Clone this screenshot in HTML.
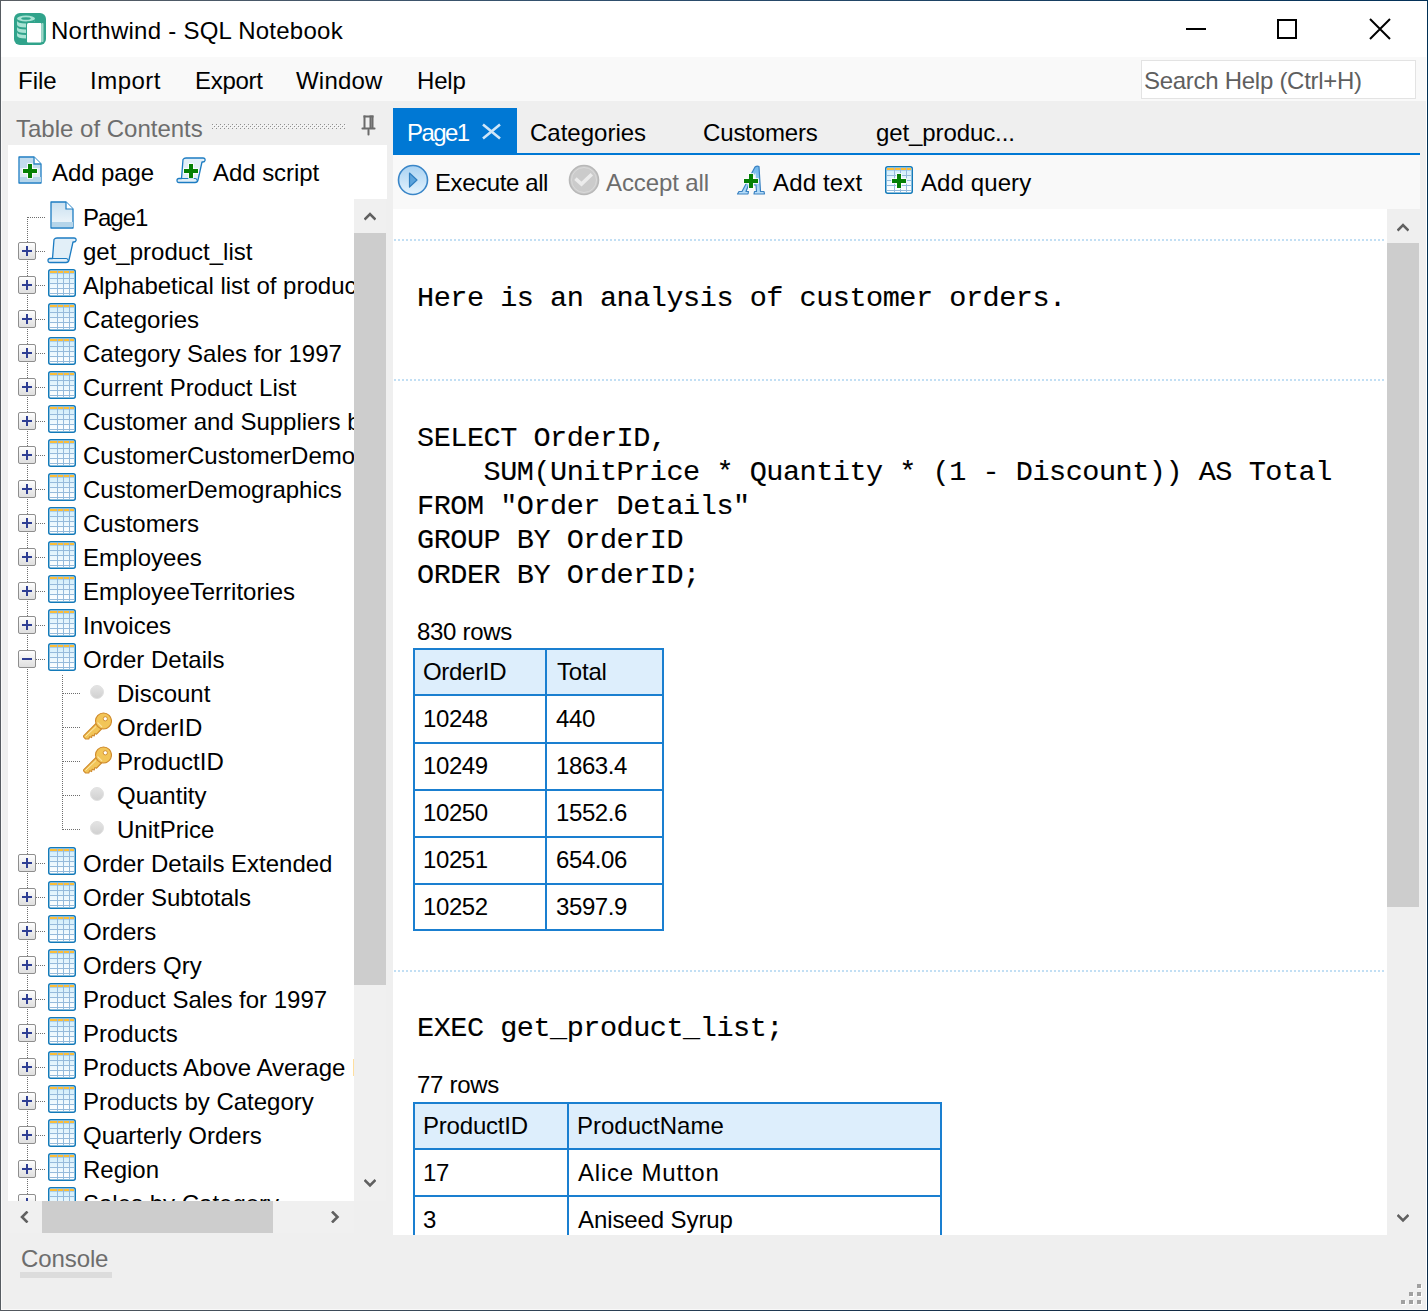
<!DOCTYPE html><html><head><meta charset="utf-8"><title>Northwind - SQL Notebook</title><style>*{margin:0;padding:0}html,body{width:1428px;height:1311px;overflow:hidden;background:#efefef}
.t{position:absolute;white-space:pre}</style></head><body><div style="position:relative;width:1428px;height:1311px;overflow:hidden;font-family:&quot;Liberation Sans&quot;,sans-serif"><div style="position:absolute;left:0px;top:0px;width:1428px;height:1311px;background:#efefef;"></div>
<div style="position:absolute;left:0px;top:0px;width:1428px;height:57px;background:#ffffff;"></div>
<div style="position:absolute;left:0px;top:57px;width:1428px;height:44px;background:#f9f9f9;"></div>
<svg style="position:absolute;left:14px;top:13px" width="32" height="32" viewBox="0 0 32 32">
<rect x="0" y="0" width="32" height="32" rx="6" fill="#30a38b"/>
<g fill="#a8e3d4">
<ellipse cx="12" cy="5.5" rx="9" ry="3"/>
<path d="M3 7.5 Q3 10.5 12 10.5 Q21 10.5 21 7.5 V11.5 Q21 14.5 12 14.5 Q3 14.5 3 11.5Z"/>
<path d="M3 13.5 Q3 16.5 12 16.5 Q21 16.5 21 13.5 V17 Q21 20 12 20 Q3 20 3 17Z"/>
<path d="M3 19 Q3 22 12 22 Q21 22 21 19 V22.5 Q21 25.5 12 25.5 Q3 25.5 3 22.5Z"/>
</g>
<ellipse cx="12" cy="5.5" rx="4.8" ry="1.3" fill="#30a38b"/>
<path d="M12 10 Q12 8.5 14 8.5 H29.5 V30 H12Z" fill="#30a38b"/>
<rect x="16" y="10" width="13.5" height="19" rx="1" fill="#9ed8c9"/><rect x="14" y="9" width="14" height="21" fill="#30a38b"/>
<path d="M13 11.5 Q13 10 14.5 10 H26.5 Q27.5 10 27.5 11 V28.5 Q27.5 29.5 26.5 29.5 H14 Q13 29.5 13 28.5Z" fill="#ffffff"/>
</svg>
<div class="t" style="left:51px;top:19px;font-family:'Liberation Sans', sans-serif;font-size:24px;line-height:24px;color:#000;letter-spacing:0.25px">Northwind - SQL Notebook</div>
<svg style="position:absolute;left:1180px;top:10px" width="120" height="40" viewBox="0 0 120 40">
<rect x="6" y="18" width="20" height="2" fill="#000"/>
<rect x="98" y="10" width="18" height="18" fill="none" stroke="#000" stroke-width="2"/>
</svg>
<svg style="position:absolute;left:1365px;top:14px" width="30" height="30" viewBox="0 0 30 30"><path d="M5 5 L25 25 M25 5 L5 25" stroke="#000" stroke-width="2" fill="none"/></svg>
<div class="t" style="left:18px;top:69px;font-family:'Liberation Sans', sans-serif;font-size:24px;line-height:24px;color:#000;letter-spacing:0px">File</div>
<div class="t" style="left:90px;top:69px;font-family:'Liberation Sans', sans-serif;font-size:24px;line-height:24px;color:#000;letter-spacing:0.5px">Import</div>
<div class="t" style="left:195px;top:69px;font-family:'Liberation Sans', sans-serif;font-size:24px;line-height:24px;color:#000;letter-spacing:-0.3px">Export</div>
<div class="t" style="left:296px;top:69px;font-family:'Liberation Sans', sans-serif;font-size:24px;line-height:24px;color:#000;letter-spacing:0.2px">Window</div>
<div class="t" style="left:417px;top:69px;font-family:'Liberation Sans', sans-serif;font-size:24px;line-height:24px;color:#000;letter-spacing:-0.2px">Help</div>
<div style="position:absolute;left:1141px;top:60px;width:275px;height:39px;background:#ffffff;box-sizing:border-box;border:1px solid #e3e3e3"></div>
<div class="t" style="left:1144px;top:69px;font-family:'Liberation Sans', sans-serif;font-size:24px;line-height:24px;color:#5f5f5f;letter-spacing:-0.28px">Search Help (Ctrl+H)</div>
<div class="t" style="left:16px;top:117px;font-family:'Liberation Sans', sans-serif;font-size:24px;line-height:24px;color:#6d6d6d;letter-spacing:0px">Table of Contents</div>
<svg style="position:absolute;left:212px;top:124px" width="134" height="5" viewBox="0 0 134 5"><defs><pattern id="gp" width="4" height="4" patternUnits="userSpaceOnUse"><rect x="0" y="0" width="1" height="1" fill="#8f8f8f"/><rect x="2" y="2" width="1" height="1" fill="#8f8f8f"/><rect x="1" y="1" width="1" height="1" fill="#fbfbfb"/><rect x="3" y="3" width="1" height="1" fill="#fbfbfb"/></pattern></defs><rect width="134" height="5" fill="url(#gp)"/></svg>
<svg style="position:absolute;left:360px;top:114px" width="18" height="24" viewBox="0 0 18 24"><g fill="#6b6b6b"><rect x="3.5" y="1.5" width="10" height="2"/><rect x="3.5" y="1.5" width="2" height="12.5"/><rect x="9.5" y="1.5" width="4" height="12.5"/><rect x="1.5" y="13.5" width="14" height="2" rx="0.8"/><rect x="7.5" y="15" width="2" height="6.5" rx="0.8"/></g><rect x="11" y="3.5" width="0.8" height="10" fill="#8a8a8a"/></svg>
<div style="position:absolute;left:8px;top:145px;width:379px;height:54px;background:#ffffff;"></div>
<svg style="position:absolute;left:18px;top:156px" width="26" height="30" viewBox="0 0 26 30"><path d="M1 1 H16 L23 8 V27 H1 Z" fill="#dcebf5" stroke="#1c7cc2" stroke-width="1.3" stroke-linejoin="round"/>
<path d="M2 2 H15 V9 H22 V12 H2Z" fill="#c3dcee"/>
<rect x="2" y="21" width="21" height="5" fill="#b5d5ea"/>
<path d="M16 1 V8 H23" fill="#fff" stroke="#2c86c4" stroke-width="1.4"/>
<path d="M5 13 h5 v-5 h4 v5 h5 v4 h-5 v5 h-4 v-5 h-5z" fill="#058005" stroke="#ffffff" stroke-width="1.6" paint-order="stroke" stroke-linejoin="miter"/></svg>
<div class="t" style="left:52px;top:161px;font-family:'Liberation Sans', sans-serif;font-size:24px;line-height:24px;color:#000;letter-spacing:-0.1px">Add page</div>
<svg style="position:absolute;left:176px;top:157px" width="31" height="28" viewBox="0 0 31 28"><path d="M7 2.5 Q8 1 10 1 H27 Q29.5 1 29 3.5 Q28.5 5 27 5 H26 L22 23 Q21.5 25.5 19 25.5 H3 Q1 25.5 1 23.5 Q1 21.5 3 21.5 H5.5 Z" fill="#e2eff8" stroke="#1c7cc2" stroke-width="1.3" stroke-linejoin="round"/>
<path d="M4 21.5 H19 Q21 21.5 21 23.5" fill="none" stroke="#1c7cc2" stroke-width="1.1"/>
<path d="M8 12 h5 v-5 h4 v5 h5 v4 h-5 v5 h-4 v-5 h-5z" fill="#058005" stroke="#ffffff" stroke-width="1.6" paint-order="stroke" stroke-linejoin="miter"/></svg>
<div class="t" style="left:213px;top:161px;font-family:'Liberation Sans', sans-serif;font-size:24px;line-height:24px;color:#000;letter-spacing:-0.05px">Add script</div>
<div style="position:absolute;left:8px;top:199px;width:346px;height:1002px;background:#ffffff;"></div>
<div style="position:absolute;left:354px;top:199px;width:32px;height:1002px;background:#f0f0f0;"></div>
<div style="position:absolute;left:354px;top:233px;width:32px;height:752px;background:#cdcdcd;"></div>
<svg style="position:absolute;left:364px;top:210px" width="12" height="12" viewBox="0 0 12 12"><path d="M0.5 9.5 L6 4 L11.5 9.5" fill="none" stroke="#606060" stroke-width="2.6" stroke-linejoin="miter"/></svg>
<svg style="position:absolute;left:364px;top:1178px" width="12" height="12" viewBox="0 0 12 12"><path d="M0.5 2 L6 7.5 L11.5 2" fill="none" stroke="#606060" stroke-width="2.6" stroke-linejoin="miter"/></svg>
<div style="position:absolute;left:8px;top:1201px;width:346px;height:32px;background:#f0f0f0;"></div>
<div style="position:absolute;left:42px;top:1201px;width:231px;height:32px;background:#cdcdcd;"></div>
<svg style="position:absolute;left:18px;top:1211px" width="12" height="12" viewBox="0 0 12 12"><path d="M9.5 0.5 L4 6 L9.5 11.5" fill="none" stroke="#606060" stroke-width="2.6"/></svg>
<svg style="position:absolute;left:330px;top:1211px" width="12" height="12" viewBox="0 0 12 12"><path d="M2 0.5 L7.5 6 L2 11.5" fill="none" stroke="#606060" stroke-width="2.6"/></svg>
<div style="position:absolute;left:8px;top:199px;width:346px;height:1002px;overflow:hidden">
<svg width="0" height="0" style="position:absolute"><defs>
<linearGradient id="tg" x1="0" y1="0" x2="0" y2="1"><stop offset="0" stop-color="#d2eefb"/><stop offset="1" stop-color="#ffffff"/></linearGradient>
<linearGradient id="pg" x1="0" y1="0" x2="0" y2="1"><stop offset="0" stop-color="#c9e0f0"/><stop offset="1" stop-color="#f4f9fc"/></linearGradient>
<linearGradient id="bg" x1="0" y1="0" x2="0" y2="1"><stop offset="0" stop-color="#ffffff"/><stop offset="1" stop-color="#dedede"/></linearGradient>
<linearGradient id="dg" x1="0" y1="0" x2="0" y2="1"><stop offset="0" stop-color="#e4e4e4"/><stop offset="1" stop-color="#d0d0d0"/></linearGradient>
</defs></svg>
<div style="position:absolute;left:19px;top:18px;width:1px;height:1002px;background:;background:repeating-linear-gradient(to bottom,#6e6e6e 0 1px,transparent 1px 2px)"></div>
<div style="position:absolute;left:54px;top:476px;width:1px;height:155px;background:;background:repeating-linear-gradient(to bottom,#6e6e6e 0 1px,transparent 1px 2px)"></div>
<div style="position:absolute;left:20px;top:18px;width:18px;height:1px;background:;background:repeating-linear-gradient(to right,#6e6e6e 0 1px,transparent 1px 2px)"></div>
<svg style="position:absolute;left:42px;top:2px" width="24" height="28" viewBox="0 0 24 28"><path d="M1 1 H16 L23 8 V27 H1 Z" fill="url(#pg)" stroke="#1c7cc2" stroke-width="1.3" stroke-linejoin="round"/>
<rect x="2" y="21" width="21" height="5" fill="#b5d5ea"/>
<path d="M16 1 V8 H23" fill="#fff" stroke="#1c7cc2" stroke-width="1.2"/></svg>
<div class="t" style="left:75px;top:7px;font-family:'Liberation Sans', sans-serif;font-size:24px;line-height:24px;color:#000;letter-spacing:-1px">Page1</div>
<div style="position:absolute;left:28px;top:52px;width:10px;height:1px;background:;background:repeating-linear-gradient(to right,#6e6e6e 0 1px,transparent 1px 2px)"></div>
<svg style="position:absolute;left:10px;top:43px" width="18" height="18" viewBox="0 0 18 18"><rect x="0.5" y="0.5" width="17" height="17" rx="1.5" fill="url(#bg)" stroke="#8e8e8e"/><rect x="4" y="8" width="10" height="2" fill="#2f3f94"/><rect x="8" y="4" width="2" height="10" fill="#2f3f94"/></svg>
<svg style="position:absolute;left:39px;top:38px" width="31" height="28" viewBox="0 0 31 28"><path d="M7 2.5 Q8 1 10 1 H27 Q29.5 1 29 3.5 Q28.5 5 27 5 H26 L22 23 Q21.5 25.5 19 25.5 H3 Q1 25.5 1 23.5 Q1 21.5 3 21.5 H5.5 Z" fill="#e2eff8" stroke="#1c7cc2" stroke-width="1.3" stroke-linejoin="round"/>
<path d="M4 21.5 H19 Q21 21.5 21 23.5" fill="none" stroke="#1c7cc2" stroke-width="1.1"/>
</svg>
<div class="t" style="left:75px;top:41px;font-family:'Liberation Sans', sans-serif;font-size:24px;line-height:24px;color:#000;">get_product_list</div>
<div style="position:absolute;left:28px;top:86px;width:10px;height:1px;background:;background:repeating-linear-gradient(to right,#6e6e6e 0 1px,transparent 1px 2px)"></div>
<svg style="position:absolute;left:10px;top:77px" width="18" height="18" viewBox="0 0 18 18"><rect x="0.5" y="0.5" width="17" height="17" rx="1.5" fill="url(#bg)" stroke="#8e8e8e"/><rect x="4" y="8" width="10" height="2" fill="#2f3f94"/><rect x="8" y="4" width="2" height="10" fill="#2f3f94"/></svg>
<svg style="position:absolute;left:40px;top:70px" width="28" height="28" viewBox="0 0 28 28"><rect x="0.75" y="0.75" width="26.5" height="26.5" rx="2" fill="#ffffff" stroke="#137ab9" stroke-width="1.5"/>
<rect x="2" y="4" width="24" height="21" fill="url(#tg)"/>
<rect x="2" y="2" width="24" height="2" fill="#fbbd38"/>
<g fill="#95badb"><rect x="2" y="4" width="24" height="1" fill="#a9d0ee"/><rect x="2" y="9" width="24" height="1"/><rect x="2" y="14" width="24" height="1"/><rect x="2" y="19" width="24" height="1"/><rect x="2" y="24" width="24" height="1"/>
<rect x="9" y="2" width="1" height="24"/><rect x="15" y="2" width="1" height="24"/><rect x="21" y="2" width="1" height="24"/></g></svg>
<div class="t" style="left:75px;top:75px;font-family:'Liberation Sans', sans-serif;font-size:24px;line-height:24px;color:#000;">Alphabetical list of products</div>
<div style="position:absolute;left:28px;top:120px;width:10px;height:1px;background:;background:repeating-linear-gradient(to right,#6e6e6e 0 1px,transparent 1px 2px)"></div>
<svg style="position:absolute;left:10px;top:111px" width="18" height="18" viewBox="0 0 18 18"><rect x="0.5" y="0.5" width="17" height="17" rx="1.5" fill="url(#bg)" stroke="#8e8e8e"/><rect x="4" y="8" width="10" height="2" fill="#2f3f94"/><rect x="8" y="4" width="2" height="10" fill="#2f3f94"/></svg>
<svg style="position:absolute;left:40px;top:104px" width="28" height="28" viewBox="0 0 28 28"><rect x="0.75" y="0.75" width="26.5" height="26.5" rx="2" fill="#ffffff" stroke="#137ab9" stroke-width="1.5"/>
<rect x="2" y="4" width="24" height="21" fill="url(#tg)"/>
<rect x="2" y="2" width="24" height="2" fill="#fbbd38"/>
<g fill="#95badb"><rect x="2" y="4" width="24" height="1" fill="#a9d0ee"/><rect x="2" y="9" width="24" height="1"/><rect x="2" y="14" width="24" height="1"/><rect x="2" y="19" width="24" height="1"/><rect x="2" y="24" width="24" height="1"/>
<rect x="9" y="2" width="1" height="24"/><rect x="15" y="2" width="1" height="24"/><rect x="21" y="2" width="1" height="24"/></g></svg>
<div class="t" style="left:75px;top:109px;font-family:'Liberation Sans', sans-serif;font-size:24px;line-height:24px;color:#000;">Categories</div>
<div style="position:absolute;left:28px;top:154px;width:10px;height:1px;background:;background:repeating-linear-gradient(to right,#6e6e6e 0 1px,transparent 1px 2px)"></div>
<svg style="position:absolute;left:10px;top:145px" width="18" height="18" viewBox="0 0 18 18"><rect x="0.5" y="0.5" width="17" height="17" rx="1.5" fill="url(#bg)" stroke="#8e8e8e"/><rect x="4" y="8" width="10" height="2" fill="#2f3f94"/><rect x="8" y="4" width="2" height="10" fill="#2f3f94"/></svg>
<svg style="position:absolute;left:40px;top:138px" width="28" height="28" viewBox="0 0 28 28"><rect x="0.75" y="0.75" width="26.5" height="26.5" rx="2" fill="#ffffff" stroke="#137ab9" stroke-width="1.5"/>
<rect x="2" y="4" width="24" height="21" fill="url(#tg)"/>
<rect x="2" y="2" width="24" height="2" fill="#fbbd38"/>
<g fill="#95badb"><rect x="2" y="4" width="24" height="1" fill="#a9d0ee"/><rect x="2" y="9" width="24" height="1"/><rect x="2" y="14" width="24" height="1"/><rect x="2" y="19" width="24" height="1"/><rect x="2" y="24" width="24" height="1"/>
<rect x="9" y="2" width="1" height="24"/><rect x="15" y="2" width="1" height="24"/><rect x="21" y="2" width="1" height="24"/></g></svg>
<div class="t" style="left:75px;top:143px;font-family:'Liberation Sans', sans-serif;font-size:24px;line-height:24px;color:#000;">Category Sales for 1997</div>
<div style="position:absolute;left:28px;top:188px;width:10px;height:1px;background:;background:repeating-linear-gradient(to right,#6e6e6e 0 1px,transparent 1px 2px)"></div>
<svg style="position:absolute;left:10px;top:179px" width="18" height="18" viewBox="0 0 18 18"><rect x="0.5" y="0.5" width="17" height="17" rx="1.5" fill="url(#bg)" stroke="#8e8e8e"/><rect x="4" y="8" width="10" height="2" fill="#2f3f94"/><rect x="8" y="4" width="2" height="10" fill="#2f3f94"/></svg>
<svg style="position:absolute;left:40px;top:172px" width="28" height="28" viewBox="0 0 28 28"><rect x="0.75" y="0.75" width="26.5" height="26.5" rx="2" fill="#ffffff" stroke="#137ab9" stroke-width="1.5"/>
<rect x="2" y="4" width="24" height="21" fill="url(#tg)"/>
<rect x="2" y="2" width="24" height="2" fill="#fbbd38"/>
<g fill="#95badb"><rect x="2" y="4" width="24" height="1" fill="#a9d0ee"/><rect x="2" y="9" width="24" height="1"/><rect x="2" y="14" width="24" height="1"/><rect x="2" y="19" width="24" height="1"/><rect x="2" y="24" width="24" height="1"/>
<rect x="9" y="2" width="1" height="24"/><rect x="15" y="2" width="1" height="24"/><rect x="21" y="2" width="1" height="24"/></g></svg>
<div class="t" style="left:75px;top:177px;font-family:'Liberation Sans', sans-serif;font-size:24px;line-height:24px;color:#000;">Current Product List</div>
<div style="position:absolute;left:28px;top:222px;width:10px;height:1px;background:;background:repeating-linear-gradient(to right,#6e6e6e 0 1px,transparent 1px 2px)"></div>
<svg style="position:absolute;left:10px;top:213px" width="18" height="18" viewBox="0 0 18 18"><rect x="0.5" y="0.5" width="17" height="17" rx="1.5" fill="url(#bg)" stroke="#8e8e8e"/><rect x="4" y="8" width="10" height="2" fill="#2f3f94"/><rect x="8" y="4" width="2" height="10" fill="#2f3f94"/></svg>
<svg style="position:absolute;left:40px;top:206px" width="28" height="28" viewBox="0 0 28 28"><rect x="0.75" y="0.75" width="26.5" height="26.5" rx="2" fill="#ffffff" stroke="#137ab9" stroke-width="1.5"/>
<rect x="2" y="4" width="24" height="21" fill="url(#tg)"/>
<rect x="2" y="2" width="24" height="2" fill="#fbbd38"/>
<g fill="#95badb"><rect x="2" y="4" width="24" height="1" fill="#a9d0ee"/><rect x="2" y="9" width="24" height="1"/><rect x="2" y="14" width="24" height="1"/><rect x="2" y="19" width="24" height="1"/><rect x="2" y="24" width="24" height="1"/>
<rect x="9" y="2" width="1" height="24"/><rect x="15" y="2" width="1" height="24"/><rect x="21" y="2" width="1" height="24"/></g></svg>
<div class="t" style="left:75px;top:211px;font-family:'Liberation Sans', sans-serif;font-size:24px;line-height:24px;color:#000;">Customer and Suppliers by City</div>
<div style="position:absolute;left:28px;top:256px;width:10px;height:1px;background:;background:repeating-linear-gradient(to right,#6e6e6e 0 1px,transparent 1px 2px)"></div>
<svg style="position:absolute;left:10px;top:247px" width="18" height="18" viewBox="0 0 18 18"><rect x="0.5" y="0.5" width="17" height="17" rx="1.5" fill="url(#bg)" stroke="#8e8e8e"/><rect x="4" y="8" width="10" height="2" fill="#2f3f94"/><rect x="8" y="4" width="2" height="10" fill="#2f3f94"/></svg>
<svg style="position:absolute;left:40px;top:240px" width="28" height="28" viewBox="0 0 28 28"><rect x="0.75" y="0.75" width="26.5" height="26.5" rx="2" fill="#ffffff" stroke="#137ab9" stroke-width="1.5"/>
<rect x="2" y="4" width="24" height="21" fill="url(#tg)"/>
<rect x="2" y="2" width="24" height="2" fill="#fbbd38"/>
<g fill="#95badb"><rect x="2" y="4" width="24" height="1" fill="#a9d0ee"/><rect x="2" y="9" width="24" height="1"/><rect x="2" y="14" width="24" height="1"/><rect x="2" y="19" width="24" height="1"/><rect x="2" y="24" width="24" height="1"/>
<rect x="9" y="2" width="1" height="24"/><rect x="15" y="2" width="1" height="24"/><rect x="21" y="2" width="1" height="24"/></g></svg>
<div class="t" style="left:75px;top:245px;font-family:'Liberation Sans', sans-serif;font-size:24px;line-height:24px;color:#000;">CustomerCustomerDemo</div>
<div style="position:absolute;left:28px;top:290px;width:10px;height:1px;background:;background:repeating-linear-gradient(to right,#6e6e6e 0 1px,transparent 1px 2px)"></div>
<svg style="position:absolute;left:10px;top:281px" width="18" height="18" viewBox="0 0 18 18"><rect x="0.5" y="0.5" width="17" height="17" rx="1.5" fill="url(#bg)" stroke="#8e8e8e"/><rect x="4" y="8" width="10" height="2" fill="#2f3f94"/><rect x="8" y="4" width="2" height="10" fill="#2f3f94"/></svg>
<svg style="position:absolute;left:40px;top:274px" width="28" height="28" viewBox="0 0 28 28"><rect x="0.75" y="0.75" width="26.5" height="26.5" rx="2" fill="#ffffff" stroke="#137ab9" stroke-width="1.5"/>
<rect x="2" y="4" width="24" height="21" fill="url(#tg)"/>
<rect x="2" y="2" width="24" height="2" fill="#fbbd38"/>
<g fill="#95badb"><rect x="2" y="4" width="24" height="1" fill="#a9d0ee"/><rect x="2" y="9" width="24" height="1"/><rect x="2" y="14" width="24" height="1"/><rect x="2" y="19" width="24" height="1"/><rect x="2" y="24" width="24" height="1"/>
<rect x="9" y="2" width="1" height="24"/><rect x="15" y="2" width="1" height="24"/><rect x="21" y="2" width="1" height="24"/></g></svg>
<div class="t" style="left:75px;top:279px;font-family:'Liberation Sans', sans-serif;font-size:24px;line-height:24px;color:#000;">CustomerDemographics</div>
<div style="position:absolute;left:28px;top:324px;width:10px;height:1px;background:;background:repeating-linear-gradient(to right,#6e6e6e 0 1px,transparent 1px 2px)"></div>
<svg style="position:absolute;left:10px;top:315px" width="18" height="18" viewBox="0 0 18 18"><rect x="0.5" y="0.5" width="17" height="17" rx="1.5" fill="url(#bg)" stroke="#8e8e8e"/><rect x="4" y="8" width="10" height="2" fill="#2f3f94"/><rect x="8" y="4" width="2" height="10" fill="#2f3f94"/></svg>
<svg style="position:absolute;left:40px;top:308px" width="28" height="28" viewBox="0 0 28 28"><rect x="0.75" y="0.75" width="26.5" height="26.5" rx="2" fill="#ffffff" stroke="#137ab9" stroke-width="1.5"/>
<rect x="2" y="4" width="24" height="21" fill="url(#tg)"/>
<rect x="2" y="2" width="24" height="2" fill="#fbbd38"/>
<g fill="#95badb"><rect x="2" y="4" width="24" height="1" fill="#a9d0ee"/><rect x="2" y="9" width="24" height="1"/><rect x="2" y="14" width="24" height="1"/><rect x="2" y="19" width="24" height="1"/><rect x="2" y="24" width="24" height="1"/>
<rect x="9" y="2" width="1" height="24"/><rect x="15" y="2" width="1" height="24"/><rect x="21" y="2" width="1" height="24"/></g></svg>
<div class="t" style="left:75px;top:313px;font-family:'Liberation Sans', sans-serif;font-size:24px;line-height:24px;color:#000;">Customers</div>
<div style="position:absolute;left:28px;top:358px;width:10px;height:1px;background:;background:repeating-linear-gradient(to right,#6e6e6e 0 1px,transparent 1px 2px)"></div>
<svg style="position:absolute;left:10px;top:349px" width="18" height="18" viewBox="0 0 18 18"><rect x="0.5" y="0.5" width="17" height="17" rx="1.5" fill="url(#bg)" stroke="#8e8e8e"/><rect x="4" y="8" width="10" height="2" fill="#2f3f94"/><rect x="8" y="4" width="2" height="10" fill="#2f3f94"/></svg>
<svg style="position:absolute;left:40px;top:342px" width="28" height="28" viewBox="0 0 28 28"><rect x="0.75" y="0.75" width="26.5" height="26.5" rx="2" fill="#ffffff" stroke="#137ab9" stroke-width="1.5"/>
<rect x="2" y="4" width="24" height="21" fill="url(#tg)"/>
<rect x="2" y="2" width="24" height="2" fill="#fbbd38"/>
<g fill="#95badb"><rect x="2" y="4" width="24" height="1" fill="#a9d0ee"/><rect x="2" y="9" width="24" height="1"/><rect x="2" y="14" width="24" height="1"/><rect x="2" y="19" width="24" height="1"/><rect x="2" y="24" width="24" height="1"/>
<rect x="9" y="2" width="1" height="24"/><rect x="15" y="2" width="1" height="24"/><rect x="21" y="2" width="1" height="24"/></g></svg>
<div class="t" style="left:75px;top:347px;font-family:'Liberation Sans', sans-serif;font-size:24px;line-height:24px;color:#000;">Employees</div>
<div style="position:absolute;left:28px;top:392px;width:10px;height:1px;background:;background:repeating-linear-gradient(to right,#6e6e6e 0 1px,transparent 1px 2px)"></div>
<svg style="position:absolute;left:10px;top:383px" width="18" height="18" viewBox="0 0 18 18"><rect x="0.5" y="0.5" width="17" height="17" rx="1.5" fill="url(#bg)" stroke="#8e8e8e"/><rect x="4" y="8" width="10" height="2" fill="#2f3f94"/><rect x="8" y="4" width="2" height="10" fill="#2f3f94"/></svg>
<svg style="position:absolute;left:40px;top:376px" width="28" height="28" viewBox="0 0 28 28"><rect x="0.75" y="0.75" width="26.5" height="26.5" rx="2" fill="#ffffff" stroke="#137ab9" stroke-width="1.5"/>
<rect x="2" y="4" width="24" height="21" fill="url(#tg)"/>
<rect x="2" y="2" width="24" height="2" fill="#fbbd38"/>
<g fill="#95badb"><rect x="2" y="4" width="24" height="1" fill="#a9d0ee"/><rect x="2" y="9" width="24" height="1"/><rect x="2" y="14" width="24" height="1"/><rect x="2" y="19" width="24" height="1"/><rect x="2" y="24" width="24" height="1"/>
<rect x="9" y="2" width="1" height="24"/><rect x="15" y="2" width="1" height="24"/><rect x="21" y="2" width="1" height="24"/></g></svg>
<div class="t" style="left:75px;top:381px;font-family:'Liberation Sans', sans-serif;font-size:24px;line-height:24px;color:#000;">EmployeeTerritories</div>
<div style="position:absolute;left:28px;top:426px;width:10px;height:1px;background:;background:repeating-linear-gradient(to right,#6e6e6e 0 1px,transparent 1px 2px)"></div>
<svg style="position:absolute;left:10px;top:417px" width="18" height="18" viewBox="0 0 18 18"><rect x="0.5" y="0.5" width="17" height="17" rx="1.5" fill="url(#bg)" stroke="#8e8e8e"/><rect x="4" y="8" width="10" height="2" fill="#2f3f94"/><rect x="8" y="4" width="2" height="10" fill="#2f3f94"/></svg>
<svg style="position:absolute;left:40px;top:410px" width="28" height="28" viewBox="0 0 28 28"><rect x="0.75" y="0.75" width="26.5" height="26.5" rx="2" fill="#ffffff" stroke="#137ab9" stroke-width="1.5"/>
<rect x="2" y="4" width="24" height="21" fill="url(#tg)"/>
<rect x="2" y="2" width="24" height="2" fill="#fbbd38"/>
<g fill="#95badb"><rect x="2" y="4" width="24" height="1" fill="#a9d0ee"/><rect x="2" y="9" width="24" height="1"/><rect x="2" y="14" width="24" height="1"/><rect x="2" y="19" width="24" height="1"/><rect x="2" y="24" width="24" height="1"/>
<rect x="9" y="2" width="1" height="24"/><rect x="15" y="2" width="1" height="24"/><rect x="21" y="2" width="1" height="24"/></g></svg>
<div class="t" style="left:75px;top:415px;font-family:'Liberation Sans', sans-serif;font-size:24px;line-height:24px;color:#000;">Invoices</div>
<div style="position:absolute;left:28px;top:460px;width:10px;height:1px;background:;background:repeating-linear-gradient(to right,#6e6e6e 0 1px,transparent 1px 2px)"></div>
<svg style="position:absolute;left:10px;top:451px" width="18" height="18" viewBox="0 0 18 18"><rect x="0.5" y="0.5" width="17" height="17" rx="1.5" fill="url(#bg)" stroke="#8e8e8e"/><rect x="4" y="8" width="10" height="2" fill="#2f3f94"/></svg>
<svg style="position:absolute;left:40px;top:444px" width="28" height="28" viewBox="0 0 28 28"><rect x="0.75" y="0.75" width="26.5" height="26.5" rx="2" fill="#ffffff" stroke="#137ab9" stroke-width="1.5"/>
<rect x="2" y="4" width="24" height="21" fill="url(#tg)"/>
<rect x="2" y="2" width="24" height="2" fill="#fbbd38"/>
<g fill="#95badb"><rect x="2" y="4" width="24" height="1" fill="#a9d0ee"/><rect x="2" y="9" width="24" height="1"/><rect x="2" y="14" width="24" height="1"/><rect x="2" y="19" width="24" height="1"/><rect x="2" y="24" width="24" height="1"/>
<rect x="9" y="2" width="1" height="24"/><rect x="15" y="2" width="1" height="24"/><rect x="21" y="2" width="1" height="24"/></g></svg>
<div class="t" style="left:75px;top:449px;font-family:'Liberation Sans', sans-serif;font-size:24px;line-height:24px;color:#000;">Order Details</div>
<div style="position:absolute;left:55px;top:494px;width:18px;height:1px;background:;background:repeating-linear-gradient(to right,#6e6e6e 0 1px,transparent 1px 2px)"></div>
<svg style="position:absolute;left:82px;top:486px" width="14" height="14" viewBox="0 0 14 14"><circle cx="7" cy="7" r="6.5" fill="url(#dg)" stroke="#e0e0e0" stroke-width="1"/></svg>
<div class="t" style="left:109px;top:483px;font-family:'Liberation Sans', sans-serif;font-size:24px;line-height:24px;color:#000;">Discount</div>
<div style="position:absolute;left:55px;top:528px;width:18px;height:1px;background:;background:repeating-linear-gradient(to right,#6e6e6e 0 1px,transparent 1px 2px)"></div>
<svg style="position:absolute;left:75px;top:513px" width="29" height="28" viewBox="0 0 29 28"><g stroke="#cf8a2c" stroke-width="1.1" fill="#f2c558" stroke-linejoin="round">
<path d="M13 11.5 L0.8 23.6 Q0.2 24.6 1 25.4 L2.6 27 L5.8 27 L6.6 24.8 L8.6 25.6 L9.2 23.2 L11.2 24 L11.8 21.6 L13.6 22.2 L19 16.5 Z"/>
<circle cx="20.5" cy="9" r="8"/></g>
<circle cx="22.3" cy="6.8" r="2.1" fill="#ffffff" stroke="#cf8a2c" stroke-width="0.9"/>
<path d="M14.5 10.5 L19 15" stroke="#fbe3a0" stroke-width="1.1"/>
<path d="M2.5 24.5 L13 14.5" stroke="#fde9b0" stroke-width="1"/></svg>
<div class="t" style="left:109px;top:517px;font-family:'Liberation Sans', sans-serif;font-size:24px;line-height:24px;color:#000;">OrderID</div>
<div style="position:absolute;left:55px;top:562px;width:18px;height:1px;background:;background:repeating-linear-gradient(to right,#6e6e6e 0 1px,transparent 1px 2px)"></div>
<svg style="position:absolute;left:75px;top:547px" width="29" height="28" viewBox="0 0 29 28"><g stroke="#cf8a2c" stroke-width="1.1" fill="#f2c558" stroke-linejoin="round">
<path d="M13 11.5 L0.8 23.6 Q0.2 24.6 1 25.4 L2.6 27 L5.8 27 L6.6 24.8 L8.6 25.6 L9.2 23.2 L11.2 24 L11.8 21.6 L13.6 22.2 L19 16.5 Z"/>
<circle cx="20.5" cy="9" r="8"/></g>
<circle cx="22.3" cy="6.8" r="2.1" fill="#ffffff" stroke="#cf8a2c" stroke-width="0.9"/>
<path d="M14.5 10.5 L19 15" stroke="#fbe3a0" stroke-width="1.1"/>
<path d="M2.5 24.5 L13 14.5" stroke="#fde9b0" stroke-width="1"/></svg>
<div class="t" style="left:109px;top:551px;font-family:'Liberation Sans', sans-serif;font-size:24px;line-height:24px;color:#000;">ProductID</div>
<div style="position:absolute;left:55px;top:596px;width:18px;height:1px;background:;background:repeating-linear-gradient(to right,#6e6e6e 0 1px,transparent 1px 2px)"></div>
<svg style="position:absolute;left:82px;top:588px" width="14" height="14" viewBox="0 0 14 14"><circle cx="7" cy="7" r="6.5" fill="url(#dg)" stroke="#e0e0e0" stroke-width="1"/></svg>
<div class="t" style="left:109px;top:585px;font-family:'Liberation Sans', sans-serif;font-size:24px;line-height:24px;color:#000;">Quantity</div>
<div style="position:absolute;left:55px;top:630px;width:18px;height:1px;background:;background:repeating-linear-gradient(to right,#6e6e6e 0 1px,transparent 1px 2px)"></div>
<svg style="position:absolute;left:82px;top:622px" width="14" height="14" viewBox="0 0 14 14"><circle cx="7" cy="7" r="6.5" fill="url(#dg)" stroke="#e0e0e0" stroke-width="1"/></svg>
<div class="t" style="left:109px;top:619px;font-family:'Liberation Sans', sans-serif;font-size:24px;line-height:24px;color:#000;">UnitPrice</div>
<div style="position:absolute;left:28px;top:664px;width:10px;height:1px;background:;background:repeating-linear-gradient(to right,#6e6e6e 0 1px,transparent 1px 2px)"></div>
<svg style="position:absolute;left:10px;top:655px" width="18" height="18" viewBox="0 0 18 18"><rect x="0.5" y="0.5" width="17" height="17" rx="1.5" fill="url(#bg)" stroke="#8e8e8e"/><rect x="4" y="8" width="10" height="2" fill="#2f3f94"/><rect x="8" y="4" width="2" height="10" fill="#2f3f94"/></svg>
<svg style="position:absolute;left:40px;top:648px" width="28" height="28" viewBox="0 0 28 28"><rect x="0.75" y="0.75" width="26.5" height="26.5" rx="2" fill="#ffffff" stroke="#137ab9" stroke-width="1.5"/>
<rect x="2" y="4" width="24" height="21" fill="url(#tg)"/>
<rect x="2" y="2" width="24" height="2" fill="#fbbd38"/>
<g fill="#95badb"><rect x="2" y="4" width="24" height="1" fill="#a9d0ee"/><rect x="2" y="9" width="24" height="1"/><rect x="2" y="14" width="24" height="1"/><rect x="2" y="19" width="24" height="1"/><rect x="2" y="24" width="24" height="1"/>
<rect x="9" y="2" width="1" height="24"/><rect x="15" y="2" width="1" height="24"/><rect x="21" y="2" width="1" height="24"/></g></svg>
<div class="t" style="left:75px;top:653px;font-family:'Liberation Sans', sans-serif;font-size:24px;line-height:24px;color:#000;">Order Details Extended</div>
<div style="position:absolute;left:28px;top:698px;width:10px;height:1px;background:;background:repeating-linear-gradient(to right,#6e6e6e 0 1px,transparent 1px 2px)"></div>
<svg style="position:absolute;left:10px;top:689px" width="18" height="18" viewBox="0 0 18 18"><rect x="0.5" y="0.5" width="17" height="17" rx="1.5" fill="url(#bg)" stroke="#8e8e8e"/><rect x="4" y="8" width="10" height="2" fill="#2f3f94"/><rect x="8" y="4" width="2" height="10" fill="#2f3f94"/></svg>
<svg style="position:absolute;left:40px;top:682px" width="28" height="28" viewBox="0 0 28 28"><rect x="0.75" y="0.75" width="26.5" height="26.5" rx="2" fill="#ffffff" stroke="#137ab9" stroke-width="1.5"/>
<rect x="2" y="4" width="24" height="21" fill="url(#tg)"/>
<rect x="2" y="2" width="24" height="2" fill="#fbbd38"/>
<g fill="#95badb"><rect x="2" y="4" width="24" height="1" fill="#a9d0ee"/><rect x="2" y="9" width="24" height="1"/><rect x="2" y="14" width="24" height="1"/><rect x="2" y="19" width="24" height="1"/><rect x="2" y="24" width="24" height="1"/>
<rect x="9" y="2" width="1" height="24"/><rect x="15" y="2" width="1" height="24"/><rect x="21" y="2" width="1" height="24"/></g></svg>
<div class="t" style="left:75px;top:687px;font-family:'Liberation Sans', sans-serif;font-size:24px;line-height:24px;color:#000;">Order Subtotals</div>
<div style="position:absolute;left:28px;top:732px;width:10px;height:1px;background:;background:repeating-linear-gradient(to right,#6e6e6e 0 1px,transparent 1px 2px)"></div>
<svg style="position:absolute;left:10px;top:723px" width="18" height="18" viewBox="0 0 18 18"><rect x="0.5" y="0.5" width="17" height="17" rx="1.5" fill="url(#bg)" stroke="#8e8e8e"/><rect x="4" y="8" width="10" height="2" fill="#2f3f94"/><rect x="8" y="4" width="2" height="10" fill="#2f3f94"/></svg>
<svg style="position:absolute;left:40px;top:716px" width="28" height="28" viewBox="0 0 28 28"><rect x="0.75" y="0.75" width="26.5" height="26.5" rx="2" fill="#ffffff" stroke="#137ab9" stroke-width="1.5"/>
<rect x="2" y="4" width="24" height="21" fill="url(#tg)"/>
<rect x="2" y="2" width="24" height="2" fill="#fbbd38"/>
<g fill="#95badb"><rect x="2" y="4" width="24" height="1" fill="#a9d0ee"/><rect x="2" y="9" width="24" height="1"/><rect x="2" y="14" width="24" height="1"/><rect x="2" y="19" width="24" height="1"/><rect x="2" y="24" width="24" height="1"/>
<rect x="9" y="2" width="1" height="24"/><rect x="15" y="2" width="1" height="24"/><rect x="21" y="2" width="1" height="24"/></g></svg>
<div class="t" style="left:75px;top:721px;font-family:'Liberation Sans', sans-serif;font-size:24px;line-height:24px;color:#000;">Orders</div>
<div style="position:absolute;left:28px;top:766px;width:10px;height:1px;background:;background:repeating-linear-gradient(to right,#6e6e6e 0 1px,transparent 1px 2px)"></div>
<svg style="position:absolute;left:10px;top:757px" width="18" height="18" viewBox="0 0 18 18"><rect x="0.5" y="0.5" width="17" height="17" rx="1.5" fill="url(#bg)" stroke="#8e8e8e"/><rect x="4" y="8" width="10" height="2" fill="#2f3f94"/><rect x="8" y="4" width="2" height="10" fill="#2f3f94"/></svg>
<svg style="position:absolute;left:40px;top:750px" width="28" height="28" viewBox="0 0 28 28"><rect x="0.75" y="0.75" width="26.5" height="26.5" rx="2" fill="#ffffff" stroke="#137ab9" stroke-width="1.5"/>
<rect x="2" y="4" width="24" height="21" fill="url(#tg)"/>
<rect x="2" y="2" width="24" height="2" fill="#fbbd38"/>
<g fill="#95badb"><rect x="2" y="4" width="24" height="1" fill="#a9d0ee"/><rect x="2" y="9" width="24" height="1"/><rect x="2" y="14" width="24" height="1"/><rect x="2" y="19" width="24" height="1"/><rect x="2" y="24" width="24" height="1"/>
<rect x="9" y="2" width="1" height="24"/><rect x="15" y="2" width="1" height="24"/><rect x="21" y="2" width="1" height="24"/></g></svg>
<div class="t" style="left:75px;top:755px;font-family:'Liberation Sans', sans-serif;font-size:24px;line-height:24px;color:#000;">Orders Qry</div>
<div style="position:absolute;left:28px;top:800px;width:10px;height:1px;background:;background:repeating-linear-gradient(to right,#6e6e6e 0 1px,transparent 1px 2px)"></div>
<svg style="position:absolute;left:10px;top:791px" width="18" height="18" viewBox="0 0 18 18"><rect x="0.5" y="0.5" width="17" height="17" rx="1.5" fill="url(#bg)" stroke="#8e8e8e"/><rect x="4" y="8" width="10" height="2" fill="#2f3f94"/><rect x="8" y="4" width="2" height="10" fill="#2f3f94"/></svg>
<svg style="position:absolute;left:40px;top:784px" width="28" height="28" viewBox="0 0 28 28"><rect x="0.75" y="0.75" width="26.5" height="26.5" rx="2" fill="#ffffff" stroke="#137ab9" stroke-width="1.5"/>
<rect x="2" y="4" width="24" height="21" fill="url(#tg)"/>
<rect x="2" y="2" width="24" height="2" fill="#fbbd38"/>
<g fill="#95badb"><rect x="2" y="4" width="24" height="1" fill="#a9d0ee"/><rect x="2" y="9" width="24" height="1"/><rect x="2" y="14" width="24" height="1"/><rect x="2" y="19" width="24" height="1"/><rect x="2" y="24" width="24" height="1"/>
<rect x="9" y="2" width="1" height="24"/><rect x="15" y="2" width="1" height="24"/><rect x="21" y="2" width="1" height="24"/></g></svg>
<div class="t" style="left:75px;top:789px;font-family:'Liberation Sans', sans-serif;font-size:24px;line-height:24px;color:#000;">Product Sales for 1997</div>
<div style="position:absolute;left:28px;top:834px;width:10px;height:1px;background:;background:repeating-linear-gradient(to right,#6e6e6e 0 1px,transparent 1px 2px)"></div>
<svg style="position:absolute;left:10px;top:825px" width="18" height="18" viewBox="0 0 18 18"><rect x="0.5" y="0.5" width="17" height="17" rx="1.5" fill="url(#bg)" stroke="#8e8e8e"/><rect x="4" y="8" width="10" height="2" fill="#2f3f94"/><rect x="8" y="4" width="2" height="10" fill="#2f3f94"/></svg>
<svg style="position:absolute;left:40px;top:818px" width="28" height="28" viewBox="0 0 28 28"><rect x="0.75" y="0.75" width="26.5" height="26.5" rx="2" fill="#ffffff" stroke="#137ab9" stroke-width="1.5"/>
<rect x="2" y="4" width="24" height="21" fill="url(#tg)"/>
<rect x="2" y="2" width="24" height="2" fill="#fbbd38"/>
<g fill="#95badb"><rect x="2" y="4" width="24" height="1" fill="#a9d0ee"/><rect x="2" y="9" width="24" height="1"/><rect x="2" y="14" width="24" height="1"/><rect x="2" y="19" width="24" height="1"/><rect x="2" y="24" width="24" height="1"/>
<rect x="9" y="2" width="1" height="24"/><rect x="15" y="2" width="1" height="24"/><rect x="21" y="2" width="1" height="24"/></g></svg>
<div class="t" style="left:75px;top:823px;font-family:'Liberation Sans', sans-serif;font-size:24px;line-height:24px;color:#000;">Products</div>
<div style="position:absolute;left:28px;top:868px;width:10px;height:1px;background:;background:repeating-linear-gradient(to right,#6e6e6e 0 1px,transparent 1px 2px)"></div>
<svg style="position:absolute;left:10px;top:859px" width="18" height="18" viewBox="0 0 18 18"><rect x="0.5" y="0.5" width="17" height="17" rx="1.5" fill="url(#bg)" stroke="#8e8e8e"/><rect x="4" y="8" width="10" height="2" fill="#2f3f94"/><rect x="8" y="4" width="2" height="10" fill="#2f3f94"/></svg>
<svg style="position:absolute;left:40px;top:852px" width="28" height="28" viewBox="0 0 28 28"><rect x="0.75" y="0.75" width="26.5" height="26.5" rx="2" fill="#ffffff" stroke="#137ab9" stroke-width="1.5"/>
<rect x="2" y="4" width="24" height="21" fill="url(#tg)"/>
<rect x="2" y="2" width="24" height="2" fill="#fbbd38"/>
<g fill="#95badb"><rect x="2" y="4" width="24" height="1" fill="#a9d0ee"/><rect x="2" y="9" width="24" height="1"/><rect x="2" y="14" width="24" height="1"/><rect x="2" y="19" width="24" height="1"/><rect x="2" y="24" width="24" height="1"/>
<rect x="9" y="2" width="1" height="24"/><rect x="15" y="2" width="1" height="24"/><rect x="21" y="2" width="1" height="24"/></g></svg>
<div class="t" style="left:75px;top:857px;font-family:'Liberation Sans', sans-serif;font-size:24px;line-height:24px;color:#000;">Products Above Average Price</div>
<div style="position:absolute;left:28px;top:902px;width:10px;height:1px;background:;background:repeating-linear-gradient(to right,#6e6e6e 0 1px,transparent 1px 2px)"></div>
<svg style="position:absolute;left:10px;top:893px" width="18" height="18" viewBox="0 0 18 18"><rect x="0.5" y="0.5" width="17" height="17" rx="1.5" fill="url(#bg)" stroke="#8e8e8e"/><rect x="4" y="8" width="10" height="2" fill="#2f3f94"/><rect x="8" y="4" width="2" height="10" fill="#2f3f94"/></svg>
<svg style="position:absolute;left:40px;top:886px" width="28" height="28" viewBox="0 0 28 28"><rect x="0.75" y="0.75" width="26.5" height="26.5" rx="2" fill="#ffffff" stroke="#137ab9" stroke-width="1.5"/>
<rect x="2" y="4" width="24" height="21" fill="url(#tg)"/>
<rect x="2" y="2" width="24" height="2" fill="#fbbd38"/>
<g fill="#95badb"><rect x="2" y="4" width="24" height="1" fill="#a9d0ee"/><rect x="2" y="9" width="24" height="1"/><rect x="2" y="14" width="24" height="1"/><rect x="2" y="19" width="24" height="1"/><rect x="2" y="24" width="24" height="1"/>
<rect x="9" y="2" width="1" height="24"/><rect x="15" y="2" width="1" height="24"/><rect x="21" y="2" width="1" height="24"/></g></svg>
<div class="t" style="left:75px;top:891px;font-family:'Liberation Sans', sans-serif;font-size:24px;line-height:24px;color:#000;">Products by Category</div>
<div style="position:absolute;left:28px;top:936px;width:10px;height:1px;background:;background:repeating-linear-gradient(to right,#6e6e6e 0 1px,transparent 1px 2px)"></div>
<svg style="position:absolute;left:10px;top:927px" width="18" height="18" viewBox="0 0 18 18"><rect x="0.5" y="0.5" width="17" height="17" rx="1.5" fill="url(#bg)" stroke="#8e8e8e"/><rect x="4" y="8" width="10" height="2" fill="#2f3f94"/><rect x="8" y="4" width="2" height="10" fill="#2f3f94"/></svg>
<svg style="position:absolute;left:40px;top:920px" width="28" height="28" viewBox="0 0 28 28"><rect x="0.75" y="0.75" width="26.5" height="26.5" rx="2" fill="#ffffff" stroke="#137ab9" stroke-width="1.5"/>
<rect x="2" y="4" width="24" height="21" fill="url(#tg)"/>
<rect x="2" y="2" width="24" height="2" fill="#fbbd38"/>
<g fill="#95badb"><rect x="2" y="4" width="24" height="1" fill="#a9d0ee"/><rect x="2" y="9" width="24" height="1"/><rect x="2" y="14" width="24" height="1"/><rect x="2" y="19" width="24" height="1"/><rect x="2" y="24" width="24" height="1"/>
<rect x="9" y="2" width="1" height="24"/><rect x="15" y="2" width="1" height="24"/><rect x="21" y="2" width="1" height="24"/></g></svg>
<div class="t" style="left:75px;top:925px;font-family:'Liberation Sans', sans-serif;font-size:24px;line-height:24px;color:#000;">Quarterly Orders</div>
<div style="position:absolute;left:28px;top:970px;width:10px;height:1px;background:;background:repeating-linear-gradient(to right,#6e6e6e 0 1px,transparent 1px 2px)"></div>
<svg style="position:absolute;left:10px;top:961px" width="18" height="18" viewBox="0 0 18 18"><rect x="0.5" y="0.5" width="17" height="17" rx="1.5" fill="url(#bg)" stroke="#8e8e8e"/><rect x="4" y="8" width="10" height="2" fill="#2f3f94"/><rect x="8" y="4" width="2" height="10" fill="#2f3f94"/></svg>
<svg style="position:absolute;left:40px;top:954px" width="28" height="28" viewBox="0 0 28 28"><rect x="0.75" y="0.75" width="26.5" height="26.5" rx="2" fill="#ffffff" stroke="#137ab9" stroke-width="1.5"/>
<rect x="2" y="4" width="24" height="21" fill="url(#tg)"/>
<rect x="2" y="2" width="24" height="2" fill="#fbbd38"/>
<g fill="#95badb"><rect x="2" y="4" width="24" height="1" fill="#a9d0ee"/><rect x="2" y="9" width="24" height="1"/><rect x="2" y="14" width="24" height="1"/><rect x="2" y="19" width="24" height="1"/><rect x="2" y="24" width="24" height="1"/>
<rect x="9" y="2" width="1" height="24"/><rect x="15" y="2" width="1" height="24"/><rect x="21" y="2" width="1" height="24"/></g></svg>
<div class="t" style="left:75px;top:959px;font-family:'Liberation Sans', sans-serif;font-size:24px;line-height:24px;color:#000;">Region</div>
<div style="position:absolute;left:28px;top:1004px;width:10px;height:1px;background:;background:repeating-linear-gradient(to right,#6e6e6e 0 1px,transparent 1px 2px)"></div>
<svg style="position:absolute;left:10px;top:995px" width="18" height="18" viewBox="0 0 18 18"><rect x="0.5" y="0.5" width="17" height="17" rx="1.5" fill="url(#bg)" stroke="#8e8e8e"/><rect x="4" y="8" width="10" height="2" fill="#2f3f94"/><rect x="8" y="4" width="2" height="10" fill="#2f3f94"/></svg>
<svg style="position:absolute;left:40px;top:988px" width="28" height="28" viewBox="0 0 28 28"><rect x="0.75" y="0.75" width="26.5" height="26.5" rx="2" fill="#ffffff" stroke="#137ab9" stroke-width="1.5"/>
<rect x="2" y="4" width="24" height="21" fill="url(#tg)"/>
<rect x="2" y="2" width="24" height="2" fill="#fbbd38"/>
<g fill="#95badb"><rect x="2" y="4" width="24" height="1" fill="#a9d0ee"/><rect x="2" y="9" width="24" height="1"/><rect x="2" y="14" width="24" height="1"/><rect x="2" y="19" width="24" height="1"/><rect x="2" y="24" width="24" height="1"/>
<rect x="9" y="2" width="1" height="24"/><rect x="15" y="2" width="1" height="24"/><rect x="21" y="2" width="1" height="24"/></g></svg>
<div class="t" style="left:75px;top:993px;font-family:'Liberation Sans', sans-serif;font-size:24px;line-height:24px;color:#000;">Sales by Category</div>
</div>
<div style="position:absolute;left:393px;top:108px;width:124px;height:47px;background:#0078d4;"></div>
<div style="position:absolute;left:393px;top:153px;width:1027px;height:2px;background:#0078d4;"></div>
<div class="t" style="left:407px;top:121px;font-family:'Liberation Sans', sans-serif;font-size:24px;line-height:24px;color:#ffffff;letter-spacing:-1.6px">Page1</div>
<svg style="position:absolute;left:481px;top:123px" width="21" height="17" viewBox="0 0 21 17"><path d="M2 1.5 L19 15.5 M19 1.5 L2 15.5" stroke="#cfe6f8" stroke-width="2.6" fill="none"/></svg>
<div class="t" style="left:530px;top:121px;font-family:'Liberation Sans', sans-serif;font-size:24px;line-height:24px;color:#000;">Categories</div>
<div class="t" style="left:703px;top:121px;font-family:'Liberation Sans', sans-serif;font-size:24px;line-height:24px;color:#000;letter-spacing:-0.15px">Customers</div>
<div class="t" style="left:876px;top:121px;font-family:'Liberation Sans', sans-serif;font-size:24px;line-height:24px;color:#000;letter-spacing:-0.1px">get_produc...</div>
<div style="position:absolute;left:393px;top:155px;width:1027px;height:54px;background:#f9f9f9;"></div>
<svg style="position:absolute;left:397px;top:164px" width="32" height="32" viewBox="0 0 32 32"><defs><linearGradient id="eg" x1="0" y1="0" x2="0" y2="1"><stop offset="0" stop-color="#a9d2f2"/><stop offset="1" stop-color="#e4f3fd"/></linearGradient></defs>
<circle cx="16" cy="16" r="14.5" fill="url(#eg)" stroke="#3a86c8" stroke-width="1.6"/>
<path d="M12.5 9 L20 16 L12.5 23 Z" fill="#5aa3dc" stroke="#2f7fc0" stroke-width="1.2" stroke-linejoin="round"/></svg>
<div class="t" style="left:435px;top:171px;font-family:'Liberation Sans', sans-serif;font-size:24px;line-height:24px;color:#000;letter-spacing:-0.4px">Execute all</div>
<svg style="position:absolute;left:568px;top:164px" width="32" height="32" viewBox="0 0 32 32"><circle cx="16" cy="16" r="14.5" fill="#cbcbcb" stroke="#b8b8b8" stroke-width="1.6"/>
<circle cx="16" cy="16" r="12.5" fill="none" stroke="#dadada" stroke-width="1"/><path d="M8.8 15.8 L13.5 20 L22.5 11.5" fill="none" stroke="#ececec" stroke-width="3.6" stroke-linecap="square" stroke-linejoin="miter"/></svg>
<div class="t" style="left:606px;top:171px;font-family:'Liberation Sans', sans-serif;font-size:24px;line-height:24px;color:#6d6d6d;letter-spacing:-0.1px">Accept all</div>
<svg style="position:absolute;left:736px;top:165px" width="30" height="31" viewBox="0 0 30 31"><defs><linearGradient id="ag" x1="0" y1="0" x2="0" y2="1"><stop offset="0" stop-color="#6fb6ec"/><stop offset="1" stop-color="#b9def9"/></linearGradient></defs>
<path d="M1.5 29 L3 26.5 H6 L19 2 Q21 0.5 23 1.5 L24.5 26.5 H28 L28.5 29 H18 L18.5 26.5 H20.5 L20 20 H12.5 L10 26.5 H12.5 L12 29 Z" fill="url(#ag)" stroke="#3a82c2" stroke-width="1.2" stroke-linejoin="round"/>
<path d="M14 17 L19.5 8 L20 17Z" fill="#f9f9f9"/><path d="M8 14 h5 v-5 h4 v5 h5 v4 h-5 v5 h-4 v-5 h-5z" fill="#058005" stroke="#ffffff" stroke-width="1.6" paint-order="stroke" stroke-linejoin="miter"/></svg>
<div class="t" style="left:773px;top:171px;font-family:'Liberation Sans', sans-serif;font-size:24px;line-height:24px;color:#000;letter-spacing:0.15px">Add text</div>
<svg style="position:absolute;left:885px;top:166px" width="30" height="30" viewBox="0 0 30 30"><rect x="0.75" y="0.75" width="26.5" height="26.5" rx="2" fill="#ffffff" stroke="#137ab9" stroke-width="1.5"/>
<rect x="2" y="4" width="24" height="21" fill="url(#tg)"/>
<rect x="2" y="2" width="24" height="2" fill="#fbbd38"/>
<g fill="#95badb"><rect x="2" y="4" width="24" height="1" fill="#a9d0ee"/><rect x="2" y="9" width="24" height="1"/><rect x="2" y="14" width="24" height="1"/><rect x="2" y="19" width="24" height="1"/><rect x="2" y="24" width="24" height="1"/>
<rect x="9" y="2" width="1" height="24"/><rect x="15" y="2" width="1" height="24"/><rect x="21" y="2" width="1" height="24"/></g><path d="M7 13 h5 v-5 h4 v5 h5 v4 h-5 v5 h-4 v-5 h-5z" fill="#058005" stroke="#ffffff" stroke-width="1.6" paint-order="stroke" stroke-linejoin="miter"/></svg>
<div class="t" style="left:921px;top:171px;font-family:'Liberation Sans', sans-serif;font-size:24px;line-height:24px;color:#000;letter-spacing:0.1px">Add query</div>
<div style="position:absolute;left:393px;top:209px;width:994px;height:1026px;background:#ffffff;"></div>
<div style="position:absolute;left:1387px;top:209px;width:33px;height:1026px;background:#efefef;"></div>
<div style="position:absolute;left:1387px;top:243px;width:32px;height:664px;background:#cdcdcd;"></div>
<svg style="position:absolute;left:1397px;top:221px" width="12" height="12" viewBox="0 0 12 12"><path d="M0.5 9.5 L6 4 L11.5 9.5" fill="none" stroke="#606060" stroke-width="2.6" stroke-linejoin="miter"/></svg>
<svg style="position:absolute;left:1397px;top:1213px" width="12" height="12" viewBox="0 0 12 12"><path d="M0.5 2 L6 7.5 L11.5 2" fill="none" stroke="#606060" stroke-width="2.6" stroke-linejoin="miter"/></svg>
<div style="position:absolute;left:393px;top:209px;width:994px;height:1026px;overflow:hidden">
<div style="position:absolute;left:1px;top:30px;width:992px;height:2px;background:;background:repeating-linear-gradient(to right,#c2dff4 0 2px,transparent 2px 4px)"></div>
<div style="position:absolute;left:1px;top:170px;width:992px;height:2px;background:;background:repeating-linear-gradient(to right,#c2dff4 0 2px,transparent 2px 4px)"></div>
<div style="position:absolute;left:1px;top:761px;width:992px;height:2px;background:;background:repeating-linear-gradient(to right,#c2dff4 0 2px,transparent 2px 4px)"></div>
<div class="t" style="left:24px;top:76px;font-family:'Liberation Mono', monospace;font-size:28.5px;line-height:28.5px;color:#000;letter-spacing:-0.47px;white-space:pre;-webkit-text-stroke:0.12px #000">Here is an analysis of customer orders.</div>
<div class="t" style="left:24px;top:216px;font-family:'Liberation Mono', monospace;font-size:28.5px;line-height:28.5px;color:#000;letter-spacing:-0.47px;white-space:pre;-webkit-text-stroke:0.12px #000">SELECT OrderID,</div>
<div class="t" style="left:24px;top:250px;font-family:'Liberation Mono', monospace;font-size:28.5px;line-height:28.5px;color:#000;letter-spacing:-0.47px;white-space:pre;-webkit-text-stroke:0.12px #000">    SUM(UnitPrice * Quantity * (1 - Discount)) AS Total</div>
<div class="t" style="left:24px;top:284px;font-family:'Liberation Mono', monospace;font-size:28.5px;line-height:28.5px;color:#000;letter-spacing:-0.47px;white-space:pre;-webkit-text-stroke:0.12px #000">FROM &quot;Order Details&quot;</div>
<div class="t" style="left:24px;top:318px;font-family:'Liberation Mono', monospace;font-size:28.5px;line-height:28.5px;color:#000;letter-spacing:-0.47px;white-space:pre;-webkit-text-stroke:0.12px #000">GROUP BY OrderID</div>
<div class="t" style="left:24px;top:353px;font-family:'Liberation Mono', monospace;font-size:28.5px;line-height:28.5px;color:#000;letter-spacing:-0.47px;white-space:pre;-webkit-text-stroke:0.12px #000">ORDER BY OrderID;</div>
<div class="t" style="left:24px;top:411px;font-family:'Liberation Sans', sans-serif;font-size:24px;line-height:24px;color:#000;letter-spacing:-0.3px">830 rows</div>
<div style="position:absolute;left:20px;top:439px;width:251px;height:46px;background:#ddeefc;"></div>
<div style="position:absolute;left:20px;top:439px;width:251px;height:2px;background:#1a7fd0;"></div>
<div style="position:absolute;left:20px;top:485px;width:251px;height:2px;background:#1a7fd0;"></div>
<div style="position:absolute;left:20px;top:533px;width:251px;height:2px;background:#1a7fd0;"></div>
<div style="position:absolute;left:20px;top:580px;width:251px;height:2px;background:#1a7fd0;"></div>
<div style="position:absolute;left:20px;top:627px;width:251px;height:2px;background:#1a7fd0;"></div>
<div style="position:absolute;left:20px;top:674px;width:251px;height:2px;background:#1a7fd0;"></div>
<div style="position:absolute;left:20px;top:720px;width:251px;height:2px;background:#1a7fd0;"></div>
<div style="position:absolute;left:20px;top:439px;width:2px;height:283px;background:#1a7fd0;"></div>
<div style="position:absolute;left:152px;top:439px;width:2px;height:283px;background:#1a7fd0;"></div>
<div style="position:absolute;left:269px;top:439px;width:2px;height:283px;background:#1a7fd0;"></div>
<div class="t" style="left:30px;top:451px;font-family:'Liberation Sans', sans-serif;font-size:24px;line-height:24px;color:#000;letter-spacing:-0.3px">OrderID</div>
<div class="t" style="left:164px;top:451px;font-family:'Liberation Sans', sans-serif;font-size:24px;line-height:24px;color:#000;letter-spacing:-0.2px">Total</div>
<div class="t" style="left:30px;top:498px;font-family:'Liberation Sans', sans-serif;font-size:24px;line-height:24px;color:#000;letter-spacing:-0.4px">10248</div>
<div class="t" style="left:163px;top:498px;font-family:'Liberation Sans', sans-serif;font-size:24px;line-height:24px;color:#000;letter-spacing:-0.4px">440</div>
<div class="t" style="left:30px;top:545px;font-family:'Liberation Sans', sans-serif;font-size:24px;line-height:24px;color:#000;letter-spacing:-0.4px">10249</div>
<div class="t" style="left:163px;top:545px;font-family:'Liberation Sans', sans-serif;font-size:24px;line-height:24px;color:#000;letter-spacing:-0.4px">1863.4</div>
<div class="t" style="left:30px;top:592px;font-family:'Liberation Sans', sans-serif;font-size:24px;line-height:24px;color:#000;letter-spacing:-0.4px">10250</div>
<div class="t" style="left:163px;top:592px;font-family:'Liberation Sans', sans-serif;font-size:24px;line-height:24px;color:#000;letter-spacing:-0.4px">1552.6</div>
<div class="t" style="left:30px;top:639px;font-family:'Liberation Sans', sans-serif;font-size:24px;line-height:24px;color:#000;letter-spacing:-0.4px">10251</div>
<div class="t" style="left:163px;top:639px;font-family:'Liberation Sans', sans-serif;font-size:24px;line-height:24px;color:#000;letter-spacing:-0.4px">654.06</div>
<div class="t" style="left:30px;top:686px;font-family:'Liberation Sans', sans-serif;font-size:24px;line-height:24px;color:#000;letter-spacing:-0.4px">10252</div>
<div class="t" style="left:163px;top:686px;font-family:'Liberation Sans', sans-serif;font-size:24px;line-height:24px;color:#000;letter-spacing:-0.4px">3597.9</div>
<div class="t" style="left:24px;top:806px;font-family:'Liberation Mono', monospace;font-size:28.5px;line-height:28.5px;color:#000;letter-spacing:-0.47px;white-space:pre;-webkit-text-stroke:0.12px #000">EXEC get_product_list;</div>
<div class="t" style="left:24px;top:864px;font-family:'Liberation Sans', sans-serif;font-size:24px;line-height:24px;color:#000;letter-spacing:-0.3px">77 rows</div>
<div style="position:absolute;left:20px;top:893px;width:529px;height:46px;background:#ddeefc;"></div>
<div style="position:absolute;left:20px;top:893px;width:529px;height:2px;background:#1a7fd0;"></div>
<div style="position:absolute;left:20px;top:939px;width:529px;height:2px;background:#1a7fd0;"></div>
<div style="position:absolute;left:20px;top:986px;width:529px;height:2px;background:#1a7fd0;"></div>
<div style="position:absolute;left:20px;top:1033px;width:529px;height:2px;background:#1a7fd0;"></div>
<div style="position:absolute;left:20px;top:893px;width:2px;height:142px;background:#1a7fd0;"></div>
<div style="position:absolute;left:174px;top:893px;width:2px;height:142px;background:#1a7fd0;"></div>
<div style="position:absolute;left:547px;top:893px;width:2px;height:142px;background:#1a7fd0;"></div>
<div class="t" style="left:30px;top:905px;font-family:'Liberation Sans', sans-serif;font-size:24px;line-height:24px;color:#000;letter-spacing:-0.2px">ProductID</div>
<div class="t" style="left:184px;top:905px;font-family:'Liberation Sans', sans-serif;font-size:24px;line-height:24px;color:#000;letter-spacing:0px">ProductName</div>
<div class="t" style="left:30px;top:952px;font-family:'Liberation Sans', sans-serif;font-size:24px;line-height:24px;color:#000;letter-spacing:-0.4px">17</div>
<div class="t" style="left:185px;top:952px;font-family:'Liberation Sans', sans-serif;font-size:24px;line-height:24px;color:#000;letter-spacing:0.8px">Alice Mutton</div>
<div class="t" style="left:30px;top:999px;font-family:'Liberation Sans', sans-serif;font-size:24px;line-height:24px;color:#000;letter-spacing:-0.4px">3</div>
<div class="t" style="left:185px;top:999px;font-family:'Liberation Sans', sans-serif;font-size:24px;line-height:24px;color:#000;letter-spacing:-0.1px">Aniseed Syrup</div>
</div>
<div class="t" style="left:21px;top:1247px;font-family:'Liberation Sans', sans-serif;font-size:24px;line-height:24px;color:#6d6d6d;letter-spacing:-0.1px">Console</div>
<div style="position:absolute;left:20px;top:1272px;width:92px;height:6px;background:#dcdcdc;"></div>
<div style="position:absolute;left:1418px;top:1285px;width:4px;height:4px;background:#ffffff;"></div>
<div style="position:absolute;left:1417px;top:1284px;width:4px;height:4px;background:#a0a0a0;"></div>
<div style="position:absolute;left:1410px;top:1293px;width:4px;height:4px;background:#ffffff;"></div>
<div style="position:absolute;left:1409px;top:1292px;width:4px;height:4px;background:#a0a0a0;"></div>
<div style="position:absolute;left:1418px;top:1293px;width:4px;height:4px;background:#ffffff;"></div>
<div style="position:absolute;left:1417px;top:1292px;width:4px;height:4px;background:#a0a0a0;"></div>
<div style="position:absolute;left:1402px;top:1301px;width:4px;height:4px;background:#ffffff;"></div>
<div style="position:absolute;left:1401px;top:1300px;width:4px;height:4px;background:#a0a0a0;"></div>
<div style="position:absolute;left:1410px;top:1301px;width:4px;height:4px;background:#ffffff;"></div>
<div style="position:absolute;left:1409px;top:1300px;width:4px;height:4px;background:#a0a0a0;"></div>
<div style="position:absolute;left:1418px;top:1301px;width:4px;height:4px;background:#ffffff;"></div>
<div style="position:absolute;left:1417px;top:1300px;width:4px;height:4px;background:#a0a0a0;"></div>
<div style="position:absolute;left:1px;top:57px;width:1px;height:1253px;background:#f9f9f9;"></div>
<div style="position:absolute;left:1px;top:1309px;width:1426px;height:1px;background:#f9f9f9;"></div>
<div style="position:absolute;left:1426px;top:57px;width:1px;height:1253px;background:#ffffff;"></div>
<div style="position:absolute;left:0px;top:0px;width:1428px;height:1px;background:;background:linear-gradient(to right,#5a5e63,#31506e 40%,#033158)"></div>
<div style="position:absolute;left:0px;top:1310px;width:1428px;height:1px;background:;background:linear-gradient(to right,#53585e,#1a3550 60%,#0a2038)"></div>
<div style="position:absolute;left:0px;top:0px;width:1px;height:1311px;background:#565b61;"></div>
<div style="position:absolute;left:1427px;top:0px;width:1px;height:1311px;background:;background:linear-gradient(to bottom,#003055,#0a2a48)"></div></div></body></html>
